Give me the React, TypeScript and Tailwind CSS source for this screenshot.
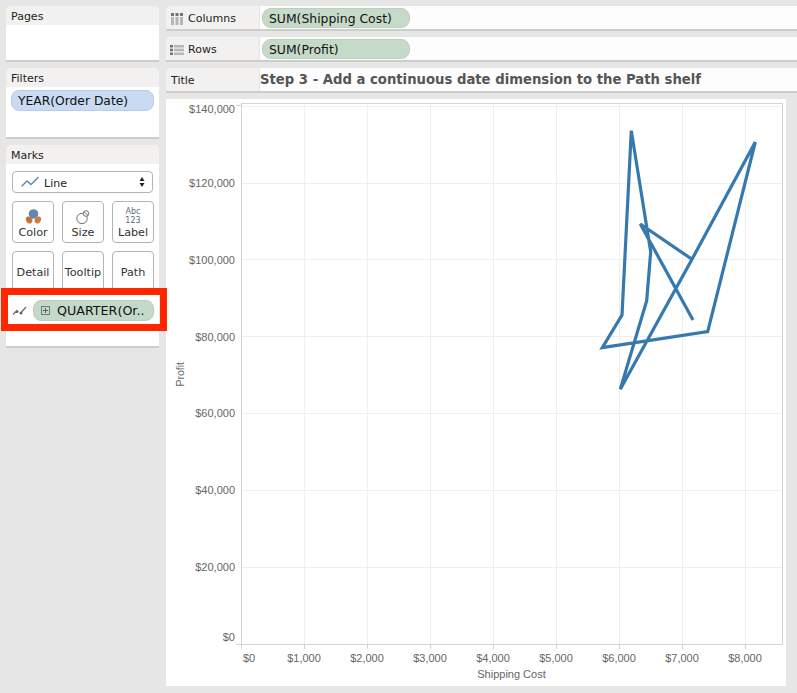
import React from 'react';

const uiFont = "font-['DejaVu_Sans',sans-serif]";
const chartFont = "font-['Liberation_Sans',sans-serif]";

const yLabels = [
  { text: '$140,000', cls: '' },
  { text: '$120,000', cls: 'mt-[58px]' },
  { text: '$100,000', cls: 'mt-[60.8px]' },
  { text: '$80,000', cls: 'mt-[60.8px]' },
  { text: '$60,000', cls: 'mt-[60.8px]' },
  { text: '$40,000', cls: 'mt-[60.8px]' },
  { text: '$20,000', cls: 'mt-[60.8px]' },
  { text: '$0', cls: 'mt-[54px]' },
];

const xLabels = ['$1,000', '$2,000', '$3,000', '$4,000', '$5,000', '$6,000', '$7,000', '$8,000'];
const xGrid = [304, 367, 430, 493, 556, 619, 682, 745];
const yGrid = [106, 183, 259, 336, 413, 490, 567];
const linePoints =
  '693,320 640.3,224 692,259.3 620.3,389.3 646.7,300.7 650.7,251.7 631.3,130.7 622,315 602.3,347.7 707.7,331.7 755.3,142 692,259.3';

function SidePanel({ title, className, children }: { title: string; className: string; children?: React.ReactNode }) {
  return (
    <div className={`relative bg-white rounded-t-[5px] border-b-2 border-[#cdcdcd] ${className}`}>
      <div className="h-[19px] bg-[#f2f1ef] rounded-t-[5px] pl-[5px] text-[11px] leading-[21px] text-[#222]">{title}</div>
      {children}
    </div>
  );
}

function Shelf({ label, icon, children }: { label: string; icon?: React.ReactNode; children: React.ReactNode }) {
  return (
    <div className="h-[25px] flex bg-[#fdfdfd] rounded-tl-[5px] border-b-2 border-[#cdcdcd]">
      <div className="w-[94px] shrink-0 bg-[#f2f1ef] rounded-tl-[5px] border-r border-[#e4e4e2] flex items-center pt-[4px] text-[11px] text-[#222]">
        {icon ? <span className="w-[22px] pl-[5px] shrink-0 -mt-[1px]">{icon}</span> : <span className="w-[5px] shrink-0" />}
        {label}
      </div>
      {children}
    </div>
  );
}

function ShelfPill({ text }: { text: string }) {
  return (
    <div className="ml-[2px] mt-[2px] w-[148px] h-[20px] rounded-[9px] bg-[#c6dac9] border border-[#b9d0bd] pl-[6px] text-[12.4px] leading-[20px] text-[#111]">
      {text}
    </div>
  );
}

function ColumnsIcon() {
  return (
    <svg width="12" height="12" viewBox="0 0 12 12" className="block">
      <rect x="0" y="0" width="3" height="3" fill="#6f7378" />
      <rect x="4.5" y="0" width="3" height="3" fill="#6f7378" />
      <rect x="9" y="0" width="3" height="3" fill="#6f7378" />
      <rect x="0" y="4" width="3" height="8" fill="#b4b6b9" />
      <rect x="4.5" y="4" width="3" height="8" fill="#b4b6b9" />
      <rect x="9" y="4" width="3" height="8" fill="#b4b6b9" />
    </svg>
  );
}

function RowsIcon() {
  return (
    <svg width="14" height="10" viewBox="0 0 14 10" className="block -ml-[1px]">
      <rect x="0" y="0" width="3" height="2.5" fill="#6f7378" />
      <rect x="0" y="3.7" width="3" height="2.5" fill="#6f7378" />
      <rect x="0" y="7.5" width="3" height="2.5" fill="#6f7378" />
      <rect x="4" y="0" width="10" height="2.5" fill="#b4b6b9" />
      <rect x="4" y="3.7" width="10" height="2.5" fill="#b4b6b9" />
      <rect x="4" y="7.5" width="10" height="2.5" fill="#b4b6b9" />
    </svg>
  );
}

function MarkButton({ label, icon }: { label: string; icon?: React.ReactNode }) {
  return (
    <div className="w-[42px] h-[42px] bg-white border border-[#b4b4b4] rounded-[4px] flex flex-col items-center justify-end pb-[2px] text-[11.2px] leading-[14px] text-[#333] whitespace-nowrap">
      {icon}
      <span className={icon ? 'mt-[1px]' : 'mb-[10px]'}>{label}</span>
    </div>
  );
}

function ColorIcon() {
  return (
    <svg width="17" height="16" viewBox="0 0 16 16" className="block">
      <path d="M0.5 9 C2 6.5 5 7.5 6.5 10 C8 12 6 15 3.5 14.5 C1.5 14 -0.2 11 0.5 9 Z" fill="#cc6f2f" />
      <path d="M15.5 9 C14 6.5 11 7.5 9.5 10 C8 12 10 15 12.5 14.5 C14.5 14 16.2 11 15.5 9 Z" fill="#d17a35" />
      <circle cx="8" cy="5" r="4.8" fill="#6289ad" />
    </svg>
  );
}

function SizeIcon() {
  return (
    <svg width="16" height="16" viewBox="0 0 16 16" fill="none" stroke="#6d7175" strokeWidth="1" className="block">
      <circle cx="7" cy="9.5" r="5.2" />
      <circle cx="11" cy="4.5" r="2.8" fill="#fff" />
      <path d="M9.2 3 L12.8 6" />
    </svg>
  );
}

export default function App() {
  return (
    <div className={`relative w-[797px] h-[693px] overflow-hidden bg-[#e6e6e6] flex pt-[6px] pl-[6px] ${uiFont}`}>
      {/* left column */}
      <div className="w-[153px] shrink-0 flex flex-col gap-[6px]">
        <SidePanel title="Pages" className="h-[56px]" />
        <SidePanel title="Filters" className="h-[71px]">
          <div className="mx-[5px] mt-[3px] h-[21px] rounded-[8px] bg-[#c9daf3] border border-[#b8cce9] pl-[6px] text-[12.3px] leading-[21px] text-[#111]">
            YEAR(Order Date)
          </div>
        </SidePanel>
        <SidePanel title="Marks" className="h-[203px]">
          <div className="mx-[6px] mt-[7px] h-[22px] bg-white border border-[#b4b4b4] rounded-[4px] flex items-center text-[11px] text-[#222]">
            <svg width="18" height="12" viewBox="0 0 18 12" fill="none" stroke="#5f88ad" strokeWidth="1.4" className="ml-[8px]">
              <path d="M0.5 10.5 L6 5 L10 8.5 L17.5 1" />
            </svg>
            <span className="ml-[5px] mt-[4px]">Line</span>
            <svg width="6" height="12" viewBox="0 0 6 12" className="ml-auto mr-[7px]" fill="#222">
              <path d="M3 1 L5.5 5 L0.5 5 Z M3 11 L0.5 7 L5.5 7 Z" />
            </svg>
          </div>
          <div className="mx-[6px] mt-[8px] grid grid-cols-[42px_42px_42px] gap-x-[8px] gap-y-[8px]">
            <MarkButton label="Color" icon={<ColorIcon />} />
            <MarkButton label="Size" icon={<SizeIcon />} />
            <MarkButton
              label="Label"
              icon={
                <span className="block text-center text-[8px] leading-[9px] text-[#5c6a78]">
                  Abc
                  <br />
                  123
                </span>
              }
            />
            <MarkButton label="Detail" />
            <MarkButton label="Tooltip" />
            <MarkButton label="Path" />
          </div>
          <div className="mt-[7px] flex items-center pl-[6px]">
            <svg width="16" height="10" viewBox="0 0 16 10" className="shrink-0" fill="none">
              <path d="M1 8.5 L4 5.5" stroke="#6c7480" strokeWidth="1.4" />
              <path d="M9.5 6 L14 1" stroke="#6c7480" strokeWidth="1.4" />
              <circle cx="5" cy="5.5" r="1.5" fill="#5d646c" />
              <circle cx="9" cy="7" r="1.5" fill="#5d646c" />
            </svg>
            <div className="ml-[5px] w-[121px] h-[21px] rounded-[8px] bg-[#c4d9c9] border border-[#b9d0bd] flex items-center pl-[7px] text-[12.7px] text-[#111] whitespace-nowrap">
              <span className="w-[9px] h-[9px] border border-[#6d7a72] mr-[7px] shrink-0 flex items-center justify-center">
                <svg width="7" height="7" viewBox="0 0 7 7" stroke="#56625b" strokeWidth="1">
                  <path d="M3.5 1 V6 M1 3.5 H6" />
                </svg>
              </span>
              QUARTER(Or..
            </div>
          </div>
          {/* red annotation box laid over the panel */}
          <div className="absolute left-[-5px] top-[143px] w-[166px] h-[43px] border-[7px] border-[#ff2600]" />
        </SidePanel>
      </div>

      {/* right column */}
      <div className="ml-[7px] flex-1 flex flex-col gap-[6px]">
        <Shelf label="Columns" icon={<ColumnsIcon />}>
          <ShelfPill text="SUM(Shipping Cost)" />
        </Shelf>
        <Shelf label="Rows" icon={<RowsIcon />}>
          <ShelfPill text="SUM(Profit)" />
        </Shelf>
        <Shelf label="Title">
          <div className="text-[14.7px] leading-[21px] font-bold text-[#555] whitespace-nowrap font-['DejaVu_Sans_Condensed','DejaVu_Sans',sans-serif]">
            Step 3 - Add a continuous date dimension to the Path shelf
          </div>
        </Shelf>

        {/* chart */}
        <div className={`w-[620px] h-[587px] bg-white pt-[4px] text-[11px] text-[#666] ${chartFont}`}>
          <div className="flex">
            <div className="w-[70px] shrink-0 flex">
              <div className="w-[23px] shrink-0 flex items-center justify-end pb-[4px]">
                <span className="[writing-mode:vertical-rl] rotate-180 text-[10.5px]">Profit</span>
              </div>
              <div className="flex-1 -mt-[2px] pr-[1px] text-right leading-[16px]">
                {yLabels.map((l) => (
                  <div key={l.text} className={`h-4 ${l.cls}`}>
                    {l.text}
                  </div>
                ))}
              </div>
            </div>
            <svg width="547" height="547" viewBox="236 103 547 547" className="block shrink-0" fill="none">
              {yGrid.map((y) => (
                <line key={y} x1="241" x2="782" y1={y + 0.5} y2={y + 0.5} stroke="#efefef" />
              ))}
              {xGrid.map((x) => (
                <line key={x} x1={x + 0.5} x2={x + 0.5} y1="103" y2="644" stroke="#efefef" />
              ))}
              <rect x="241.5" y="103.5" width="541" height="541" stroke="#d4d4d4" />
              <line x1="236" x2="241" y1="105.5" y2="105.5" stroke="#d4d4d4" />
              <line x1="236" x2="241" y1="644.5" y2="644.5" stroke="#d4d4d4" />
              <line x1="241.5" x2="241.5" y1="644" y2="649" stroke="#d4d4d4" />
              {xGrid.map((x) => (
                <line key={x} x1={x + 0.5} x2={x + 0.5} y1="644" y2="649" stroke="#d4d4d4" />
              ))}
              <polyline points={linePoints} stroke="#3679ae" strokeWidth="3.2" strokeLinejoin="miter" />
            </svg>
          </div>
          <div className="flex ml-[75px] mt-[1px] leading-[14px]">
            <div className="w-[31.5px] pl-[2px] shrink-0">$0</div>
            {xLabels.map((l) => (
              <div key={l} className="w-[63px] shrink-0 text-center">
                {l}
              </div>
            ))}
          </div>
          <div className="ml-[75px] w-[541px] mt-[2px] text-center leading-[14px]">Shipping Cost</div>
        </div>
      </div>
    </div>
  );
}
